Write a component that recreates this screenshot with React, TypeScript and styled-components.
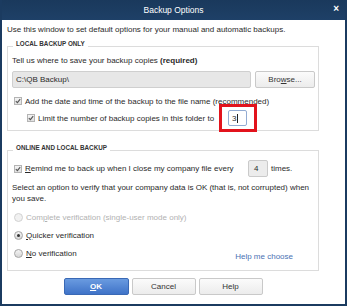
import React from "react";
import styled, { createGlobalStyle } from "styled-components";

const GlobalStyle = createGlobalStyle`
  html, body { margin: 0; padding: 0; background: #ffffff; }
  body { font-family: "Liberation Sans", Arial, sans-serif; color: #2a2a2a; }
  * { box-sizing: border-box; }
`;

const Window = styled.div`
  width: 347px;
  height: 306px;
  background: #1b3b60;
  padding: 0 2px 2px 2px;
  display: flex;
  flex-direction: column;
`;

const TitleBar = styled.div`
  height: 20px;
  flex: none;
  display: grid;
  grid-template-columns: 1fr auto 1fr;
  align-items: center;
  color: #ffffff;
  font-size: 8.5px;
  background: linear-gradient(#1a395c, #1e4067);
`;

const Title = styled.span`
  grid-column: 2;
`;

const Close = styled.span`
  grid-column: 3;
  justify-self: end;
  margin-right: 6px;
  margin-top: -3px;
  font-size: 10px;
  font-weight: 700;
  line-height: 1;
`;

const Body = styled.div`
  flex: 1;
  background: #ffffff;
  padding: 5px 26px 0 5px;
  display: flex;
  flex-direction: column;
  font-size: 8px;
`;

const Intro = styled.div`
  line-height: 10px;
  height: 10px;
`;

const Group = styled.fieldset<{ $top: number; $padBottom: number }>`
  margin: ${(p) => p.$top}px 0 0 0;
  padding: 4px 3px ${(p) => p.$padBottom}px 4px;
  border: 1px solid #dcdcdc;
  min-width: 0;
`;

const Legend = styled.legend`
  font-size: 6.3px;
  font-weight: 700;
  color: #333333;
  line-height: 8px;
  padding: 0 3px 4px 3px;
  margin-left: 1px;
`;

const Line = styled.div<{ $mt?: number; $lh?: number }>`
  margin-top: ${(p) => p.$mt ?? 0}px;
  line-height: ${(p) => p.$lh ?? 10}px;
`;

const Row = styled.div<{ $mt?: number; $indent?: number; $h?: number }>`
  display: flex;
  align-items: center;
  margin-top: ${(p) => p.$mt ?? 0}px;
  padding-left: ${(p) => p.$indent ?? 0}px;
  height: ${(p) => p.$h ?? 10}px;
`;

const PathInput = styled.div`
  width: 239px;
  height: 17px;
  background: #e7e7e7;
  border: 1px solid #cfcfcf;
  border-radius: 2px;
  display: flex;
  align-items: center;
  padding-left: 3px;
`;

const Button = styled.div<{ $w: number; $primary?: boolean }>`
  width: ${(p) => p.$w}px;
  height: 17px;
  display: flex;
  align-items: center;
  justify-content: center;
  border-radius: 2px;
  border: 1px solid ${(p) => (p.$primary ? "#3a69b5" : "#c9c9c9")};
  background: ${(p) =>
    p.$primary
      ? "linear-gradient(#6a9be0, #3f73c8)"
      : "linear-gradient(#fbfbfb, #ececec)"};
  color: ${(p) => (p.$primary ? "#ffffff" : "#333333")};
  font-weight: ${(p) => (p.$primary ? 700 : 400)};
`;

const Check = styled.span`
  width: 8px;
  height: 8px;
  flex: none;
  border: 1px solid #b4b4b4;
  background: linear-gradient(#f4f4f4, #e0e0e0);
  display: flex;
  align-items: center;
  justify-content: center;
`;

const Radio = styled.span<{ $on?: boolean; $disabled?: boolean }>`
  width: 9px;
  height: 9px;
  flex: none;
  border-radius: 50%;
  border: 1px solid ${(p) => (p.$disabled ? "#d2d2d2" : "#a5a5a5")};
  background: ${(p) =>
    p.$disabled ? "#f1f1f1" : "linear-gradient(#f4f4f4, #d6d6d6)"};
  display: flex;
  align-items: center;
  justify-content: center;
  &::after {
    content: "";
    display: ${(p) => (p.$on ? "block" : "none")};
    width: 3px;
    height: 3px;
    border-radius: 50%;
    background: #333333;
  }
`;

const Label = styled.span<{ $w?: number; $gap?: number; $disabled?: boolean }>`
  margin-left: ${(p) => p.$gap ?? 3}px;
  width: ${(p) => (p.$w ? `${p.$w}px` : "auto")};
  flex: none;
  white-space: nowrap;
  color: ${(p) => (p.$disabled ? "#b2b2b2" : "inherit")};
`;

const NumWrap = styled.span`
  position: relative;
  display: inline-flex;
  margin-left: 3px;
`;

const NumInput = styled.div<{ $active?: boolean; $w: number; $h: number }>`
  width: ${(p) => p.$w}px;
  height: ${(p) => p.$h}px;
  border: 1px solid ${(p) => (p.$active ? "#93acd3" : "#cacaca")};
  border-radius: 2px;
  background: ${(p) => (p.$active ? "#ffffff" : "#ececec")};
  display: flex;
  align-items: center;
  padding-left: ${(p) => (p.$active ? 3 : 5)}px;
`;

const Caret = styled.span`
  display: inline-block;
  width: 1px;
  height: 9px;
  background: #222;
  margin-left: 0.5px;
`;

const Highlight = styled.span`
  position: absolute;
  left: -9px;
  top: -6px;
  right: -10px;
  bottom: -6px;
  border: 3px solid #e2131c;
  pointer-events: none;
`;

const Link = styled.span`
  color: #4a72b4;
  margin-left: auto;
  margin-right: 22px;
  margin-top: 6px;
`;

const Buttons = styled.div`
  display: flex;
  justify-content: center;
  gap: 3px;
  margin-top: 7px;
`;

const U = styled.span`
  text-decoration: underline;
`;

const Tick = () => (
  <svg width="6" height="6" viewBox="0 0 6 6">
    <path d="M0.8 3.2 L2.4 4.7 L5.2 1.2" fill="none" stroke="#555555" strokeWidth="1.1" />
  </svg>
);

export default function App() {
  return (
    <>
      <GlobalStyle />
      <Window>
        <TitleBar>
          <Title>Backup Options</Title>
          <Close>×</Close>
        </TitleBar>
        <Body>
          <Intro>Use this window to set default options for your manual and automatic backups.</Intro>

          <Group $top={5} $padBottom={4}>
            <Legend>LOCAL BACKUP ONLY</Legend>
            <Line>
              Tell us where to save your backup copies <b>(required)</b>
            </Line>
            <Row $mt={5} $h={17}>
              <PathInput>C:\QB Backup\</PathInput>
              <Button $w={60} style={{ marginLeft: 4 }}>
                Bro<U>w</U>se...
              </Button>
            </Row>
            <Row $mt={8} $indent={2}>
              <Check>
                <Tick />
              </Check>
              <Label>Add the date and time of the backup to the file name (recommended)</Label>
            </Row>
            <Row $mt={4} $indent={15} $h={16}>
              <Check>
                <Tick />
              </Check>
              <Label $w={187}>Limit the number of backup copies in this folder to</Label>
              <NumWrap>
                <NumInput $active $w={19} $h={16}>
                  3<Caret />
                </NumInput>
                <Highlight />
              </NumWrap>
            </Row>
          </Group>

          <Group $top={13} $padBottom={12}>
            <Legend>ONLINE AND LOCAL BACKUP</Legend>
            <Row $indent={2} $h={17}>
              <Check>
                <Tick />
              </Check>
              <Label $w={220}>
                <U>R</U>emind me to back up when I close my company file every
              </Label>
              <NumWrap>
                <NumInput $w={20} $h={17}>4</NumInput>
              </NumWrap>
              <Label $gap={3}>times.</Label>
            </Row>
            <Line $mt={5} $lh={11}>
              Select an option to verify that your company data is OK (that is, not corrupted) when
              <br />
              you save.
            </Line>
            <Row $mt={8} $indent={2}>
              <Radio $disabled />
              <Label $disabled>
                Com<U>p</U>lete verification (single-user mode only)
              </Label>
            </Row>
            <Row $mt={8} $indent={2}>
              <Radio $on />
              <Label>
                <U>Q</U>uicker verification
              </Label>
            </Row>
            <Row $mt={8} $indent={2}>
              <Radio />
              <Label>
                <U>N</U>o verification
              </Label>
              <Link>Help me choose</Link>
            </Row>
          </Group>

          <Buttons>
            <Button $w={65} $primary>
              <U>O</U>K
            </Button>
            <Button $w={64}>Cancel</Button>
            <Button $w={64}>Help</Button>
          </Buttons>
        </Body>
      </Window>
    </>
  );
}
